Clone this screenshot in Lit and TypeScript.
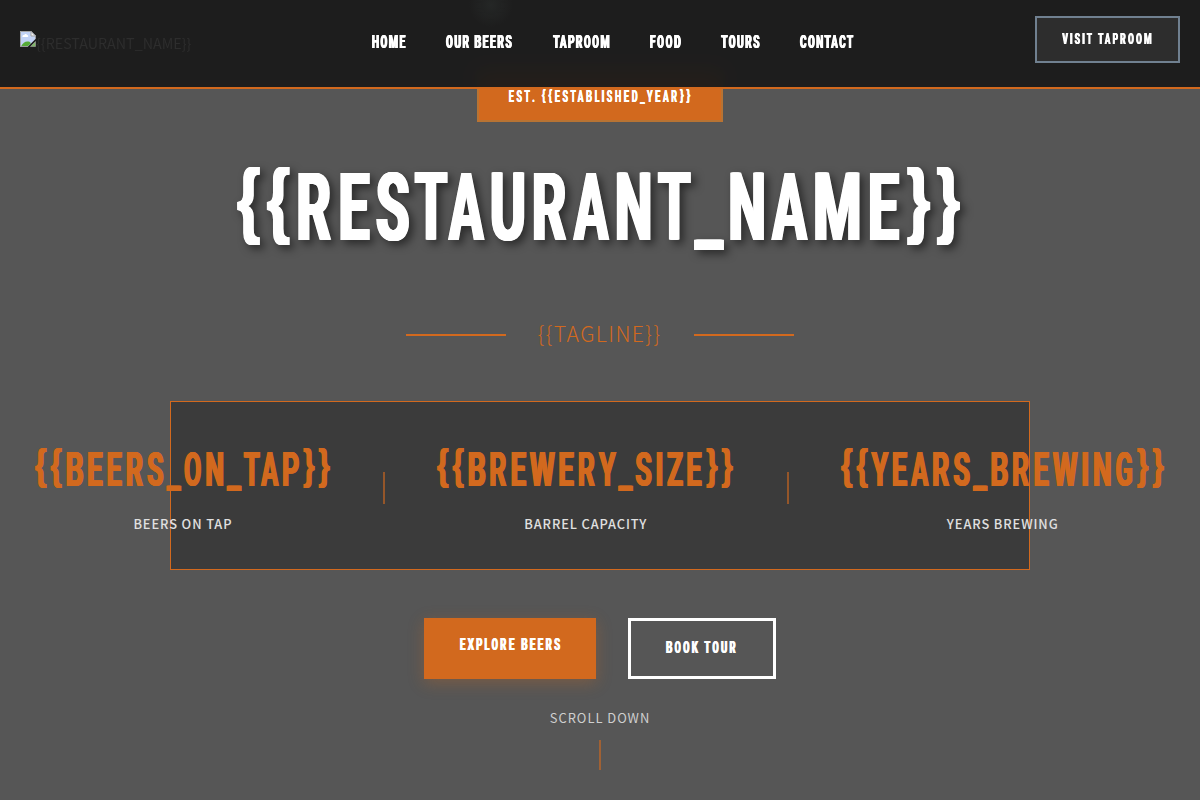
import { LitElement, html, svg, css } from "lit";
import { customElement, property } from "lit/decorators.js";

// Condensed display face metrics in em: [left bearing, ink width, advance]
const METRICS: Record<string, [number, number, number]> = {
  A: [0.01, 0.385, 0.405], B: [0.042, 0.355, 0.42], C: [0.035, 0.34, 0.405],
  D: [0.042, 0.345, 0.42], E: [0.042, 0.309, 0.374], F: [0.042, 0.29, 0.35],
  G: [0.035, 0.34, 0.41], H: [0.042, 0.354, 0.438], I: [0.042, 0.125, 0.209],
  K: [0.042, 0.37, 0.415], L: [0.042, 0.28, 0.33], M: [0.042, 0.465, 0.549],
  N: [0.042, 0.354, 0.438], O: [0.035, 0.35, 0.42], P: [0.042, 0.34, 0.4],
  R: [0.042, 0.344, 0.417], S: [0.02, 0.344, 0.389], T: [0.01, 0.347, 0.367],
  U: [0.038, 0.342, 0.414], V: [0.005, 0.385, 0.395], W: [0.012, 0.535, 0.56],
  X: [0.007, 0.39, 0.405], Y: [0.003, 0.382, 0.385], Z: [0.025, 0.333, 0.37],
  _: [0, 0.3125, 0.3125], "{": [0.025, 0.24, 0.289], "}": [0.035, 0.24, 0.289],
  ".": [0.04, 0.12, 0.19], " ": [0, 0, 0.17],
};
const KERN: Record<string, number> = { TA: -0.042, AT: -0.02 };

// Vertical ink extent of braces above and below the baseline, in em
const BRACE_TOP = 0.762;
const BRACE_BOTTOM = 0.052;

const canvas = document.createElement("canvas").getContext("2d")!;

function inkOf(ch: string) {
  const brace = ch === "{" || ch === "}";
  canvas.font = brace ? '700 200px "Liberation Sans"' : "700 200px Roboto";
  const m = canvas.measureText(ch);
  const ascent = m.actualBoundingBoxAscent / 200;
  const descent = m.actualBoundingBoxDescent / 200;
  const scale = brace ? (BRACE_TOP + BRACE_BOTTOM) / (ascent + descent) : 0.99;
  return {
    brace,
    scale,
    drop: brace ? BRACE_BOTTOM - descent * scale : 0,
    left: (-m.actualBoundingBoxLeft / 200) * scale,
    width: ((m.actualBoundingBoxLeft + m.actualBoundingBoxRight) / 200) * scale,
    advance: (m.width / 200) * scale,
  };
}

@customElement("display-text")
class DisplayText extends LitElement {
  @property() text = "";
  @property({ type: Number }) size = 16;
  @property({ type: Number }) width = 100;
  @property({ type: Boolean }) bold = false;

  static styles = css`
    :host { display: block; flex: none; }
    svg { display: block; overflow: visible; }
    text { font-family: Roboto, "Liberation Sans", sans-serif; font-weight: 700; fill: currentColor; }
    .brace { font-family: "Liberation Sans", sans-serif; }
  `;

  render() {
    const chars = [...this.text];
    const s = this.size;
    const cap = s * 0.7;
    // Horizontal thickening of the stems, before the glyph is condensed
    const smear = this.bold ? 0.11 : 0.058;
    const extra = this.bold ? 0.025 : 0;
    const first = METRICS[chars[0]];
    const last = METRICS[chars[chars.length - 1]];
    let natural = -first[0] + extra;
    chars.forEach((c, i) => {
      natural += i < chars.length - 1
        ? METRICS[c][2] + (KERN[c + chars[i + 1]] ?? 0)
        : last[0] + last[1];
    });
    const spacing = (this.width - natural * s) / (chars.length - 1);
    let pen = -first[0] * s;
    const spans = chars.map((c, i) => {
      const [lsb, ink, adv] = METRICS[c];
      const g = inkOf(c);
      const k = c === " " ? 1 : (ink + extra) / (g.width + smear);
      const x = pen + (lsb - g.left * k) * s;
      const len = g.advance * k * s;
      pen += (adv + (KERN[c + (chars[i + 1] ?? "")] ?? 0)) * s + spacing;
      return svg`<tspan class=${g.brace ? "brace" : "letter"} x=${x.toFixed(2)} y=${(cap + g.drop * s).toFixed(2)} font-size=${(g.scale * s).toFixed(2)} textLength=${len.toFixed(2)} lengthAdjust="spacingAndGlyphs">${c}</tspan>`;
    });
    const m = smear * s;
    const steps = Math.max(2, Math.ceil(m));
    const shadow = Array.from({ length: steps }, (_, i) =>
      `${(m * (i + 1) / steps).toFixed(2)}px 0 0 currentColor`).join(",");
    return html`<svg width=${this.width} height=${cap}>
      <text style="text-shadow:${shadow}" xml:space="preserve">${spans}</text>
    </svg>`;
  }
}

@customElement("app-root")
class AppRoot extends LitElement {
  static styles = css`
    :host {
      display: block; position: relative; width: 1200px; height: 800px; overflow: hidden;
      background: #565656; color: #fff;
      font-family: "Noto Sans CJK JP", "Noto Sans", sans-serif;
    }
    * { box-sizing: border-box; }
    header {
      position: absolute; inset: 0 0 auto 0; z-index: 2; height: 89px; padding: 0 20px;
      display: grid; grid-template-columns: 352px 1fr 145px;
      background: radial-gradient(circle at 491px 5px, rgba(50, 56, 54, 0.35), transparent 22px), rgba(26, 26, 26, 0.95);
      border-bottom: 2px solid #d2691e;
      backdrop-filter: blur(10px);
    }
    .logo { display: flex; padding-top: 31px; color: #2d2d2d; font-size: 14.3px; line-height: 24px; }
    .logo svg { flex: none; }
    .logo span { white-space: nowrap; }
    nav { display: flex; gap: 40.4px; padding: 35.3px 0 0 0.4px; }
    .visit {
      margin-top: 16px; height: 47px; border: 2px solid #708090; background: #2d2d2d;
      padding: 15px 0 0 24.5px;
    }
    .hero { display: flex; flex-direction: column; align-items: center; padding-top: 70px; }
    .badge {
      width: 246px; height: 52px; padding: 18.8px 0 0 29.8px; background: #d2691e;
      border: 2px solid #b87333;
    }
    .title { margin-top: 51px; padding-right: 3px; filter: drop-shadow(4px 4px 4px rgba(0, 0, 0, 0.5)); }
    .tagline {
      width: 388px; height: 24px; margin-top: 82.8px; display: flex; align-items: center;
      justify-content: space-between; color: #d2691e;
      font-size: 21.2px; font-weight: 300; letter-spacing: 1.4px; line-height: 22px;
    }
    .tagline span { padding: 0 1px 3px 0; }
    .rule { width: 100px; height: 2px; background: #d2691e; }
    .stats {
      width: 860px; height: 169px; margin-top: 54px; padding-top: 50px;
      background: #3b3b3b; border: 1px solid #d2691e;
      display: flex; justify-content: center; gap: 51.8px;
    }
    .stat { flex: none; display: flex; flex-direction: column; align-items: center; color: #d2691e; padding-right: 1.4px; }
    .label {
      margin: 28px 0 0 1px; color: #e0e0e0; font-size: 12.8px; font-weight: 500;
      letter-spacing: 0.9px; line-height: 20px;
    }
    .sep { flex: none; width: 2px; height: 32px; margin: 20px 0.4px 0 0; background: #d2691e; opacity: 0.6; }
    .actions { display: flex; gap: 32px; margin-top: 48px; }
    .btn { height: 61px; }
    .primary { width: 172px; padding: 20.2px 0 0 35.6px; background: #d2691e; box-shadow: 0 4px 15px rgba(210, 105, 30, 0.3); }
    .secondary { width: 148px; padding: 20.2px 0 0 35px; border: 3px solid #fff; }
    .scroll { margin-top: 29px; font-size: 12.9px; letter-spacing: 1px; line-height: 20px; color: #cfcfcf; }
    .line { width: 2px; height: 30px; margin-top: 12px; background: #d2691e; opacity: 0.6; }
  `;

  stat(value: string, width: number, label: string) {
    return html`<div class="stat">
      <display-text .text=${value} .size=${48} .width=${width}></display-text>
      <span class="label">${label}</span>
    </div>`;
  }

  render() {
    const links: [string, number][] = [
      ["HOME", 33.7], ["OUR BEERS", 66], ["TAPROOM", 56.5], ["FOOD", 31], ["TOURS", 38.8], ["CONTACT", 53.5],
    ];
    return html`
      <header>
        <div class="logo">
          <svg width="16" height="16" viewBox="0 0 16 16">
            <path d="M0 0H11L16 5V7.500L7.500 16H0Z" fill="#c2d3f5"/>
            <path d="M1 15.500C3 11.500 5.500 10 8.500 10.500C10 10.800 10.500 11.500 10.800 12.500L7.500 15.500Z" fill="#56ab37"/>
            <path d="M.5 16V.5H11" fill="none" stroke="#a3a3a3"/>
            <path d="M0 15.500H8M15.500 5V8" stroke="#9a9a9a"/>
            <path d="M11 .5V5H15.500Z" fill="#f4f4f4" stroke="#a3a3a3"/>
            <path d="M2.500 6C2 4 4 4 4.300 4C4.600 2.500 6.800 2.800 7 4C8.600 4 8.600 6 7.500 6Z" fill="#fff"/>
            <path d="M10.500 15.500H15.500V10.500Z" fill="#7fb867" stroke="#a3a3a3" stroke-width=".6"/>
          </svg>
          <span>{{RESTAURANT_NAME}}</span>
        </div>
        <nav>${links.map(([t, w]) => html`<display-text bold .text=${t} .size=${18.3} .width=${w}></display-text>`)}</nav>
        <div class="visit"><display-text bold .text=${"VISIT TAPROOM"} .size=${15.2} .width=${89.6}></display-text></div>
      </header>
      <section class="hero">
        <div class="badge"><display-text .text=${"EST. {{ESTABLISHED_YEAR}}"} .size=${16} .width=${181.3}></display-text></div>
        <display-text class="title" .text=${"{{RESTAURANT_NAME}}"} .size=${96} .width=${723}></display-text>
        <div class="tagline"><i class="rule"></i><span>{{TAGLINE}}</span><i class="rule"></i></div>
        <div class="stats">
          ${this.stat("{{BEERS_ON_TAP}}", 295, "BEERS ON TAP")}
          <i class="sep"></i>
          ${this.stat("{{BREWERY_SIZE}}", 296, "BARREL CAPACITY")}
          <i class="sep"></i>
          ${this.stat("{{YEARS_BREWING}}", 323, "YEARS BREWING")}
        </div>
        <div class="actions">
          <div class="btn primary"><display-text bold .text=${"EXPLORE BEERS"} .size=${17} .width=${100.2}></display-text></div>
          <div class="btn secondary"><display-text bold .text=${"BOOK TOUR"} .size=${17} .width=${69.8}></display-text></div>
        </div>
        <div class="scroll">SCROLL DOWN</div>
        <i class="line"></i>
      </section>
    `;
  }
}
